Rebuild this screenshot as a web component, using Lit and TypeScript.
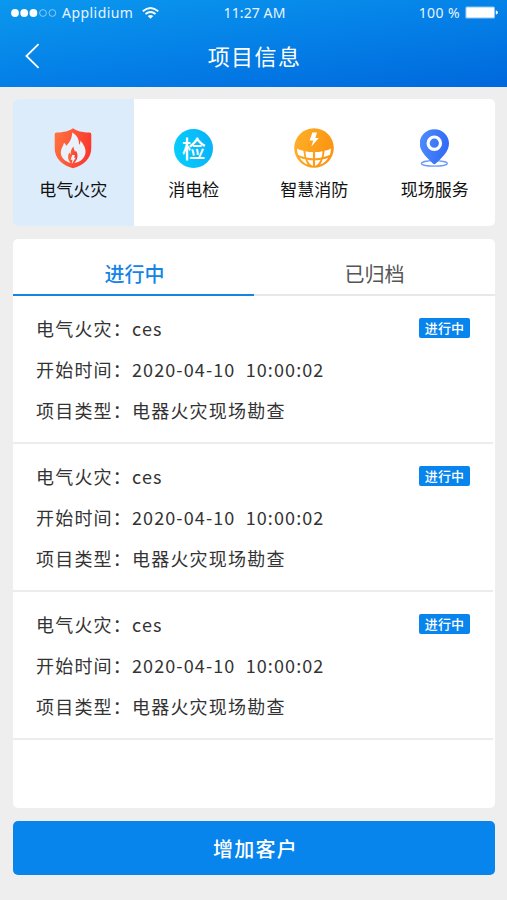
import { LitElement, html, css, svg } from "lit";
import { customElement, property } from "lit/decorators.js";
import { classMap } from "lit/directives/class-map.js";

const shieldIcon = html`<svg width="40" height="44" viewBox="0 0 40 44">
  <defs><linearGradient id="g" x1="0" y1="0" x2="1" y2="0.25">
    <stop offset="0" stop-color="#ff7540" /><stop offset="1" stop-color="#fb3a2e" />
  </linearGradient></defs>
  <path fill="url(#g)" d="M20 2.2 C23.5 5 29 6.3 36.6 6.6 Q38.3 6.8 38.3 8.6 V22 C38.3 33 30 39.5 20 42.2 C10 39.5 1.7 33 1.7 22 V8.6 Q1.7 6.8 3.4 6.6 C11 6.3 16.5 5 20 2.2 Z" />
  <path fill="#e9f1fa" d="M19.2 6.4 C24.6 9.6 26.4 14 26 18.8 C27.2 17.8 27.6 16.4 27.2 14.4 C31 18.4 33.2 23 32.4 27.4 C31.4 32.2 27.6 35.6 22.6 36.8 H17 C12 35.4 8.4 32 7.9 27.8 C7.4 23.6 9.8 21 11 16.8 C12.4 17.6 13 18.6 13 20 C16.4 16.8 19.2 12 19.2 6.4 Z" />
  <path fill="url(#g)" d="M20.6 20.6 C20.4 22.8 21.4 24.2 22.2 26 C22.6 25.4 22.7 25 22.8 24.4 C23.9 26.2 24.7 28 24.5 30.2 C24.3 33 23 35 21.2 37 H18 C16 35.2 15 33 15.1 30.4 C15.2 28.8 15.6 27.6 16.5 26.6 C16.7 27.4 17 28 17.5 28.4 C17.5 25.2 18.5 22.4 20.6 20.6 Z" />
  <path fill="#e9f1fa" d="M19.2 29 H22 L21 31.8 H22.8 L18.8 38 L19.4 33.8 H17.6 Z" />
</svg>`;

const checkIcon = html`<span class="disc">检</span>`;

const globeIcon = html`<svg width="40" height="40" viewBox="0 0 40 40">
  <defs>
    <linearGradient id="g" x1="0" y1="0" x2="1" y2="0.3">
      <stop offset="0" stop-color="#ffb02a" /><stop offset="1" stop-color="#fb9512" />
    </linearGradient>
  </defs>
  <circle cx="20" cy="20" r="19.8" fill="url(#g)" />
  <path fill="#fff" d="M18.4 4.6 H23 L21.4 10 H24.8 L17.4 18.4 L19.2 12.4 H15.6 Z" />
  <g fill="#fff">
    <path d="M3 20.4 Q6 22.2 9.4 22.8 L10.4 29 Q6.6 28.2 4 26.8 Q3.2 24 3 20.4 Z" />
    <path d="M11.4 23.2 Q15 24 18.9 24.1 V30.2 Q15.6 30.2 12.4 29.6 Q11.6 26.8 11.4 23.2 Z" />
    <path d="M21.1 24.1 Q25 24 28.6 23.2 Q28.4 26.8 27.6 29.6 Q24.4 30.2 21.1 30.2 Z" />
    <path d="M30.6 22.8 Q34 22.2 37 20.4 Q36.8 24 36 26.8 Q33.4 28.2 29.6 29 Z" />
    <path d="M5.6 29.4 Q8 30.7 11.2 31.3 Q12.2 34.2 13.8 36.6 Q8.4 34.4 5.6 29.4 Z" />
    <path d="M13.2 31.7 Q16 32.2 18.9 32.2 V38 Q15.2 36.2 13.2 31.7 Z" />
    <path d="M21.1 32.2 Q24 32.2 26.8 31.7 Q24.8 36.2 21.1 38 Z" />
    <path d="M28.8 31.3 Q32 30.7 34.4 29.4 Q31.6 34.4 26.2 36.6 Q27.8 34.2 28.8 31.3 Z" />
  </g>
</svg>`;

const pinIcon = html`<svg width="30" height="40" viewBox="0 0 30 40">
  <defs><linearGradient id="g" x1="0" y1="0" x2="1" y2="0.2">
    <stop offset="0" stop-color="#4f8df9" /><stop offset="1" stop-color="#326bf8" />
  </linearGradient></defs>
  <ellipse cx="14.3" cy="35.4" rx="13" ry="2.7" fill="none" stroke="#6d9bf5" stroke-width="1.3" />
  <path fill="url(#g)" d="M14.3 1.2 C22.6 1.2 29 7.6 29 15.4 C29 23.6 21.6 29.6 15.8 35.6 Q14.3 36.9 12.9 35.6 C7 29.6 -0.3 23.6 -0.3 15.4 C-0.3 7.6 6.1 1.2 14.3 1.2 Z" />
  <circle cx="14.3" cy="15.2" r="6.2" fill="none" stroke="#fff" stroke-width="3.2" />
</svg>`;

@customElement("status-bar")
class StatusBar extends LitElement {
  static styles = css`
    :host {
      display: grid;
      grid-template-columns: 1fr auto 1fr;
      align-items: center;
      height: 25px;
      padding: 0 9px 0 11px;
      font: 14px/20px "Noto Sans", "Open Sans", sans-serif;
      color: #e6f4ff;
    }
    .left, .right { display: flex; align-items: center; }
    .right { justify-content: flex-end; gap: 5px; }
    .dots { margin-right: 5px; }
    .carrier { letter-spacing: 0.45px; margin-right: 9px; }
    .time { letter-spacing: 0.1px; }
    .percent { font-size: 14px; letter-spacing: 0.4px; }
    svg { display: block; flex: none; }
  `;
  render() {
    return html`
      <div class="left">
        <svg class="dots" width="46" height="8" viewBox="0 0 46 8">
          ${[4, 13.2, 22.4].map((x) => svg`<circle cx=${x} cy="4" r="3.9" fill="#fff" />`)}
          ${[32, 41.4].map((x) => svg`<circle cx=${x} cy="4" r="3.4" fill="none" stroke="#a9d8fb" stroke-width="0.8" />`)}
        </svg>
        <span class="carrier">Applidium</span>
        <svg width="17" height="12" viewBox="0 0 17 12" fill="none" stroke="#fff" stroke-width="1.8">
          <path d="M0.8 4.3 Q8.5 -2.3 16.2 4.3" />
          <path d="M3.5 7 Q8.5 2.9 13.5 7" />
          <path d="M8.5 11.8 L5.7 9 Q8.5 6.8 11.3 9 Z" fill="#fff" stroke="none" />
        </svg>
      </div>
      <span class="time">11:27 AM</span>
      <div class="right">
        <span class="percent">100 %</span>
        <svg width="33" height="13" viewBox="0 0 33 13">
          <rect x="0.4" y="0.4" width="29.6" height="12.2" rx="1.5" fill="#fff" fill-opacity="0.55" />
          <rect x="1.4" y="1.4" width="27.6" height="10.2" rx="0.6" fill="#fff" />
          <path d="M30.8 4.3 Q33 5 33 6.5 Q33 8 30.8 8.7 Z" fill="#fff" />
        </svg>
      </div>`;
  }
}

@customElement("category-tile")
class CategoryTile extends LitElement {
  @property() label = "";
  @property({ attribute: false }) icon: unknown;
  static styles = css`
    :host { display: flex; flex-direction: column; align-items: center; padding-top: 28px; }
    .icon { height: 42px; display: flex; align-items: center; justify-content: center; }
    .disc {
      width: 39px; height: 39px; border-radius: 50%;
      display: grid; place-items: center;
      background: linear-gradient(75deg, #05d0fb, #0ab0f8);
      color: #fff; font-size: 24px; line-height: 38px; font-weight: 500;
    }
    .label { margin-top: 7px; font-size: 17px; line-height: 26px; color: #111; }
  `;
  render() {
    return html`<div class="icon">${this.icon}</div><div class="label">${this.label}</div>`;
  }
}

@customElement("project-card")
class ProjectCard extends LitElement {
  @property() name = "";
  @property() start = "";
  @property() kind = "";
  @property() status = "";
  static styles = css`
    :host {
      display: block; box-sizing: border-box; height: 148.2px;
      padding: 12px 24px 0 23px; margin-right: 2px;
      border-bottom: 2px solid #ececec;
      font-size: 18px; line-height: 41px; letter-spacing: 1.2px; color: #333;
    }
    .row { display: flex; align-items: center; white-space: pre; }
    .date { letter-spacing: 1.1px; }
    .badge {
      width: 51px; height: 20px; border-radius: 2px; background: #0885ec; color: #fff;
      font-size: 13px; line-height: 20px; letter-spacing: 0.1px; font-weight: 500; text-align: center;
      margin: 0 -1px 0 auto;
    }
  `;
  render() {
    return html`
      <div class="row"><span>电气火灾：${this.name}</span><span class="badge">${this.status}</span></div>
      <div class="row">开始时间：<span class="date">${this.start}</span></div>
      <div class="row">项目类型：${this.kind}</div>`;
  }
}

@customElement("app-root")
class AppRoot extends LitElement {
  private categories = [
    { label: "电气火灾", icon: shieldIcon },
    { label: "消电检", icon: checkIcon },
    { label: "智慧消防", icon: globeIcon },
    { label: "现场服务", icon: pinIcon },
  ];
  private projects = Array.from({ length: 3 }, () => ({
    name: "ces",
    start: "2020-04-10  10:00:02",
    kind: "电器火灾现场勘查",
    status: "进行中",
  }));
  static styles = css`
    :host {
      display: flex; flex-direction: column; box-sizing: border-box;
      height: 900px; background: #eee;
      font-family: "Noto Sans CJK SC", sans-serif;
    }
    .header { height: 87px; background: linear-gradient(172deg, #0b98ee 0%, #0583e8 45%, #0068dc 100%); }
    .nav { display: grid; grid-template-columns: 60px 1fr 60px; align-items: center; height: 62px; }
    .back { display: block; margin-left: 24px; }
    .title { text-align: center; color: #fff; font-size: 22px; line-height: 32px; letter-spacing: 1.4px; padding: 0 0 2px 2px; }
    .body { display: flex; flex-direction: column; flex: 1; gap: 13px; padding: 12px 12px 25px 13px; }
    .panel { background: #fff; border-radius: 5px; overflow: hidden; }
    .categories { display: grid; grid-template-columns: repeat(4, 1fr); height: 127px; flex: none; }
    .active { background: #dcecfa; }
    .list { flex: 1; }
    .tabs { display: grid; grid-template-columns: 1fr 1fr; height: 56.6px; }
    .tab {
      box-sizing: border-box; padding-top: 20px; text-align: center; font-size: 20px; line-height: 30px;
      color: #555; border-bottom: 2px solid #e8e8e8;
    }
    .current { color: #1485e6; border-color: #1485e0; font-weight: 500; padding-left: 2px; }
    .add {
      flex: none; height: 54px; border: 0; border-radius: 5px; background: #0885ec; color: #fff;
      font: 500 20px/30px "Noto Sans CJK SC", sans-serif; letter-spacing: 1.3px; padding: 2px 0 0 3px;
    }
  `;
  render() {
    return html`
      <div class="header">
        <status-bar></status-bar>
        <div class="nav">
          <svg class="back" width="17" height="26" viewBox="0 0 17 26" fill="none" stroke="#fff" stroke-width="1.8">
            <path d="M14.6 1.2 L2.4 13 L14.6 24.8" />
          </svg>
          <div class="title">项目信息</div>
        </div>
      </div>
      <div class="body">
        <div class="panel categories">
          ${this.categories.map((c, i) => html`
            <category-tile class=${classMap({ active: i === 0 })} .label=${c.label} .icon=${c.icon}></category-tile>`)}
        </div>
        <div class="panel list">
          <div class="tabs">
            <div class="tab current">进行中</div>
            <div class="tab">已归档</div>
          </div>
          ${this.projects.map((p) => html`
            <project-card .name=${p.name} .start=${p.start} .kind=${p.kind} .status=${p.status}></project-card>`)}
        </div>
        <button class="add">增加客户</button>
      </div>`;
  }
}
